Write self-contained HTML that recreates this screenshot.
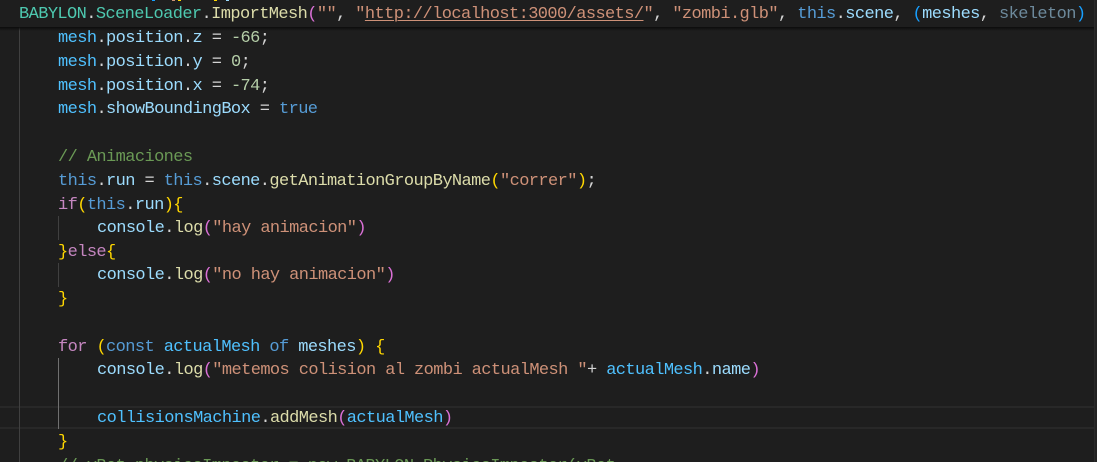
<!DOCTYPE html>
<html>
<head>
<meta charset="utf-8">
<style>
html,body{margin:0;padding:0;width:1097px;height:462px;overflow:hidden;background:#1e1e1e}
#e{position:relative;width:1097px;height:462px;overflow:hidden;background:#1e1e1e;font-family:"Liberation Mono",monospace;font-size:17px;letter-spacing:-0.595px;color:#d4d4d4}
.l{position:absolute;height:24px;line-height:24px;white-space:pre;left:19px}
.i1{left:58px}.i2{left:97px}
.v{color:#9cdcfe}.c{color:#4fc1ff}.k{color:#569cd6}.p{color:#c586c0}.s{color:#ce9178}.f{color:#dcdcaa}.t{color:#4ec9b0}.n{color:#b5cea8}.m{color:#6a9955}.d{color:#6d8a9c}
.y{color:#ffd700}.o{color:#da70d6}.b{color:#179fff}
.g{position:absolute;width:1px;background:#404040}
.a{background:#707070}
#cur{position:absolute;left:0;top:406px;width:1094px;height:19px;border-top:2px solid #282828;border-bottom:2px solid #282828}
#sb{position:absolute;left:1094px;top:0;width:3px;height:462px;background:#232323;border-left:1px solid #2a2a2a;box-sizing:border-box}
#st{position:absolute;left:0;top:0;width:1094px;height:27px;background:#1e1e1e;overflow:hidden}
#sh{position:absolute;left:0;top:27px;width:1094px;height:4px;background:linear-gradient(#0c0c0c,#1e1e1e00)}
.u{text-decoration:underline;text-underline-offset:2px;text-decoration-thickness:1px}
.x{position:absolute;top:0;width:3px;height:1px}
</style>
</head>
<body>
<div id="e">
<div id="cur"></div>
<div class="g" style="left:19px;top:27px;height:435px"></div>
<div class="g" style="left:58px;top:216px;height:24px"></div>
<div class="g" style="left:58px;top:263px;height:24px"></div>
<div class="g a" style="left:58px;top:358px;height:71px"></div>

<div class="l i1" style="top:27px"><span class="c">mesh</span>.<span class="v">position</span>.<span class="v">z</span> = <span class="n">-66</span>;</div>
<div class="l i1" style="top:51px"><span class="c">mesh</span>.<span class="v">position</span>.<span class="v">y</span> = <span class="n">0</span>;</div>
<div class="l i1" style="top:75px"><span class="c">mesh</span>.<span class="v">position</span>.<span class="v">x</span> = <span class="n">-74</span>;</div>
<div class="l i1" style="top:98px"><span class="c">mesh</span>.<span class="v">showBoundingBox</span> = <span class="k">true</span></div>
<div class="l i1" style="top:146px"><span class="m">// Animaciones</span></div>
<div class="l i1" style="top:170px"><span class="k">this</span>.<span class="v">run</span> = <span class="k">this</span>.<span class="v">scene</span>.<span class="f">getAnimationGroupByName</span><span class="y">(</span><span class="s">"correr"</span><span class="y">)</span>;</div>
<div class="l i1" style="top:194px"><span class="p">if</span><span class="y">(</span><span class="k">this</span>.<span class="v">run</span><span class="y">){</span></div>
<div class="l i2" style="top:217px"><span class="v">console</span>.<span class="f">log</span><span class="o">(</span><span class="s">"hay animacion"</span><span class="o">)</span></div>
<div class="l i1" style="top:241px"><span class="y">}</span><span class="p">else</span><span class="y">{</span></div>
<div class="l i2" style="top:264px"><span class="v">console</span>.<span class="f">log</span><span class="o">(</span><span class="s">"no hay animacion"</span><span class="o">)</span></div>
<div class="l i1" style="top:288px"><span class="y">}</span></div>
<div class="l i1" style="top:336px"><span class="p">for</span> <span class="y">(</span><span class="k">const</span> <span class="c">actualMesh</span> <span class="k">of</span> <span class="v">meshes</span><span class="y">)</span> <span class="y">{</span></div>
<div class="l i2" style="top:359px"><span class="v">console</span>.<span class="f">log</span><span class="o">(</span><span class="s">"metemos colision al zombi actualMesh "</span>+ <span class="c">actualMesh</span>.<span class="v">name</span><span class="o">)</span></div>
<div class="l i2" style="top:407px"><span class="c">collisionsMachine</span>.<span class="f">addMesh</span><span class="o">(</span><span class="c">actualMesh</span><span class="o">)</span></div>
<div class="l i1" style="top:431px"><span class="y">}</span></div>
<div class="l i1" style="top:455px"><span class="m">// vBot.physicsImpostor = new BABYLON.PhysicsImpostor(vBot</span></div>

<div id="st">
<div class="l" style="top:3px"><span class="t">BABYLON</span>.<span class="t">SceneLoader</span>.<span class="f">ImportMesh</span><span class="o">(</span><span class="s">""</span>, <span class="s">"<span class="u">http://localhost:3000/assets/</span>"</span>, <span class="s">"zombi.glb"</span>, <span class="k">this</span>.<span class="v">scene</span>, <span class="b">(</span><span class="v">meshes</span>, <span class="d">skeleton</span><span class="b">)</span></div>
<div class="x" style="left:152px;background:#179fff"></div>
<div class="x" style="left:172px;background:#ce9178"></div>
<div class="x" style="left:178px;background:#ffd700"></div>
<div class="x" style="left:214px;background:#ffd700"></div>
<div class="x" style="left:226px;background:#9cdcfe"></div>
</div>
<div id="sh"></div>
<div id="sb"></div>
</div>
</body>
</html>
